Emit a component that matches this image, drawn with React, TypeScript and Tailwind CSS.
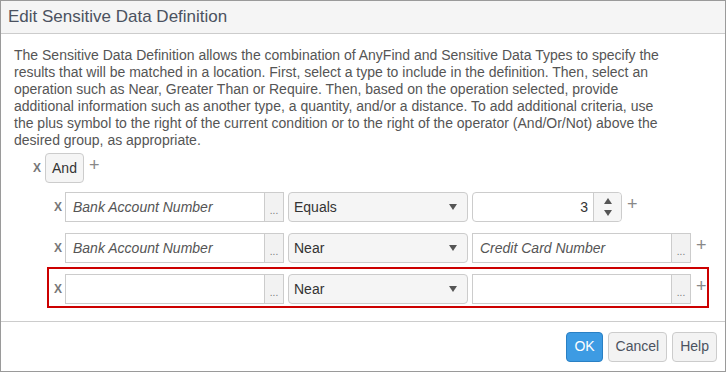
import React from 'react';

const font = { fontFamily: '"Liberation Sans", Arial, sans-serif' };

const Remove = () => (
  <span className="w-[8px] text-[12px] font-bold leading-none text-[#777]">X</span>
);

const Plus = () => (
  <span className="mb-[6px] ml-[5px] text-[18px] leading-none text-[#888]">+</span>
);

const Dots = () => (
  <div className="flex h-full w-[20px] items-end justify-center border border-[#ccc] bg-[#f2f2f2] pb-[5px] text-[10px] leading-none text-[#777]">
    ...
  </div>
);

const TypeInput: React.FC<{ value?: string }> = ({ value }) => (
  <div className="flex h-[30px]">
    <div className="flex h-full w-[199px] items-center border border-r-0 border-[#ccc] bg-white pl-[7px] text-[14px] italic text-[#555]">
      {value}
    </div>
    <Dots />
  </div>
);

const Caret = () => (
  <svg width="8" height="6" viewBox="0 0 8 6" className="shrink-0">
    <path d="M0 0 L8 0 L4 6 Z" fill="#555" />
  </svg>
);

const Select: React.FC<{ value: string }> = ({ value }) => (
  <div className="ml-[4px] flex h-[30px] w-[180px] items-center justify-between rounded-[4px] border border-[#ccc] bg-[#f5f5f5] pl-[5px] pr-[10px] text-[14px] text-[#333]">
    <span>{value}</span>
    <Caret />
  </div>
);

const NumberInput = () => (
  <div className="ml-[4px] flex h-[30px] w-[150px] rounded-[4px] border border-[#ccc] bg-white">
    <div className="flex flex-1 items-center justify-end pr-[5px] text-[14px] text-[#333]">3</div>
    <div className="flex w-[28px] flex-col items-center justify-center gap-[6px] rounded-r-[4px] border-l border-[#ccc] bg-[#f5f5f5]">
      <svg width="8" height="6" viewBox="0 0 8 6">
        <path d="M0 6 L8 6 L4 0 Z" fill="#555" />
      </svg>
      <svg width="8" height="6" viewBox="0 0 8 6">
        <path d="M0 0 L8 0 L4 6 Z" fill="#555" />
      </svg>
    </div>
  </div>
);

const lines = [
  'The Sensitive Data Definition allows the combination of AnyFind and Sensitive Data Types to specify the',
  'results that will be matched in a location. First, select a type to include in the definition. Then, select an',
  'operation such as Near, Greater Than or Require. Then, based on the operation selected, provide',
  'additional information such as another type, a quantity, and/or a distance. To add additional criteria, use',
  'the plus symbol to the right of the current condition or to the right of the operator (And/Or/Not) above the',
  'desired group, as appropriate.',
];

export default function App() {
  return (
    <div style={font} className="flex h-[372px] w-[726px] flex-col border border-[#9a9a9a] bg-white">
      <div className="flex h-[33px] items-center border-b border-[#ccc] bg-[#f5f5f5] pl-[7px] text-[17px] text-[#4b5260]">
        Edit Sensitive Data Definition
      </div>

      <div className="flex-1 pl-[13px] pt-[13px]">
        <div className="text-[14px] leading-[17px] text-[#555]">
          {lines.map(l => (
            <div key={l} className="whitespace-nowrap">{l}</div>
          ))}
        </div>

        <div className="ml-[19px] mt-[4px] flex items-center">
          <Remove />
          <div className="ml-[4px] flex h-[30px] w-[39px] items-center justify-center rounded-[4px] border border-[#ccc] bg-[#f5f5f5] text-[14px] text-[#333]">
            And
          </div>
          <Plus />
        </div>

        <div className="ml-[40px] mt-[9px] flex items-center">
          <Remove />
          <div className="ml-[3px]"><TypeInput value="Bank Account Number" /></div>
          <Select value="Equals" />
          <NumberInput />
          <Plus />
        </div>

        <div className="ml-[40px] mt-[11px] flex items-center">
          <Remove />
          <div className="ml-[3px]"><TypeInput value="Bank Account Number" /></div>
          <Select value="Near" />
          <div className="ml-[4px]"><TypeInput value="Credit Card Number" /></div>
          <Plus />
        </div>

        <div className="ml-[33px] mt-[4px] w-[662px] border-2 border-[#c00] pb-[2px] pl-[5px] pt-[5px]">
          <div className="flex items-center">
            <Remove />
            <div className="ml-[3px]"><TypeInput /></div>
            <Select value="Near" />
            <div className="ml-[4px]"><TypeInput /></div>
            <Plus />
          </div>
        </div>
      </div>

      <div className="flex h-[50px] items-center justify-end gap-[5px] border-t border-[#ccc] pr-[8px] text-[14px]">
        <button className="h-[30px] rounded-[4px] border border-[#2a80c4] bg-[#3d9be3] px-[7px] text-white">OK</button>
        <button className="h-[30px] rounded-[4px] border border-[#ccc] bg-[#f3f3f3] px-[7px] text-[#4b5260]">Cancel</button>
        <button className="h-[30px] rounded-[4px] border border-[#ccc] bg-[#f3f3f3] px-[7px] text-[#4b5260]">Help</button>
      </div>
    </div>
  );
}
